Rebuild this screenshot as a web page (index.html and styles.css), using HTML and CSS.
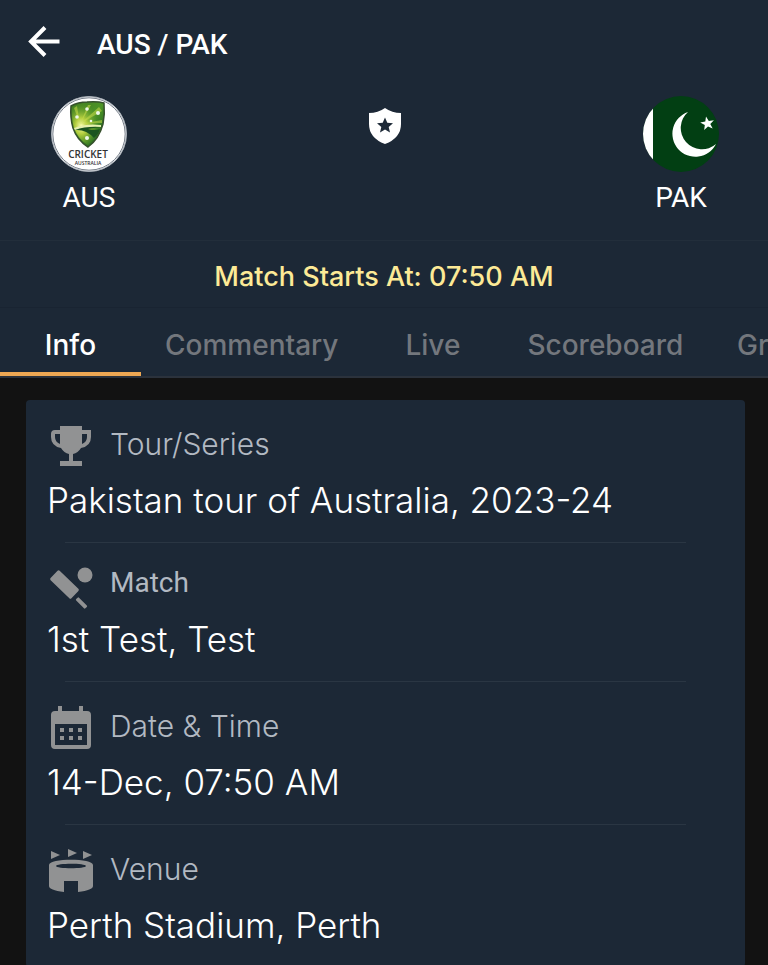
FILE: index.html
```
<!DOCTYPE html>
<html lang="en">
<head>
    <meta charset="UTF-8">
    <meta name="viewport" content="width=device-width, initial-scale=1.0">
    <title>AUS / PAK</title>
    <link rel="stylesheet" href="styles.css">
</head>
<body>
    <div class="app">
        <header class="top-bar">
            <button class="back" type="button" aria-label="Back">
                <svg width="32" height="32" viewBox="0 0 32 32" fill="none" stroke="#fff" stroke-width="4">
                    <path d="M31.500 15.500H3M17 1.500L3 15.500L17 29.500"/>
                </svg>
            </button>
            <h1>AUS / PAK</h1>
        </header>

        <section class="teams">
            <div class="team">
                <svg class="logo" viewBox="0 0 76 76">
                    <defs>
                        <linearGradient id="shield" x1="0" y1="0" x2="1" y2="1">
                            <stop offset="0" stop-color="#3f7a1f"/>
                            <stop offset="0.500" stop-color="#4d9426"/>
                            <stop offset="1" stop-color="#14551f"/>
                        </linearGradient>
                        <radialGradient id="sun" cx="0.300" cy="0.550" r="0.550">
                            <stop offset="0" stop-color="#fbffb0"/>
                            <stop offset="0.350" stop-color="#c5d943" stop-opacity="0.850"/>
                            <stop offset="1" stop-color="#5f9e2a" stop-opacity="0"/>
                        </radialGradient>
                    </defs>
                    <circle cx="38" cy="38" r="37.500" fill="#fff" stroke="#a9b0b8"/>
                    <circle cx="38" cy="38" r="36.200" fill="none" stroke="#3b4656" stroke-width="0.700"/>
                    <path d="M20 10Q27 6 36 6Q46 5 53 7Q54 18 52 28Q48 43 37 51Q26 44 22 32Q19 21 20 10Z" fill="url(#shield)" stroke="#36512c" stroke-width="1.500"/>
                    <path d="M21 11Q28 7 36 7Q46 6 52 8Q53 18 51 28Q47 42 37 49Q27 43 23 32Q20 21 21 11Z" fill="url(#sun)"/>
                    <path d="M29 28L37 9L40 9ZM29 28L48 11L51 15ZM29 28L23 12L26 10ZM29 28L51 24L51 27Z" fill="#c9dc4b" opacity="0.550"/>
                    <path d="M24 32Q36 28 50 31Q42 32 37 33Q44 35 49 33Q47 39 43 42Q35 33 24 34Z" fill="#1b5420"/>
                    <path d="M23 32Q35 27 50 29L50 31Q35 30 24 34Z" fill="#e6f0ae"/>
                    <g fill="#eef8e8">
                        <circle cx="36" cy="13" r="1.800"/>
                        <circle cx="47" cy="17" r="2"/>
                        <circle cx="26" cy="21" r="1.800"/>
                        <circle cx="40" cy="25" r="1.300"/>
                        <circle cx="36" cy="42" r="2"/>
                    </g>
                    <text class="logo-name" x="37" y="62" text-anchor="middle">CRICKET</text>
                    <text class="logo-country" x="37" y="69" text-anchor="middle">AUSTRALIA</text>
                </svg>
                <span>AUS</span>
            </div>
            <svg class="badge" width="34" height="36" viewBox="0 0 34 36">
                <path d="M17 0Q24 5 33 5V16Q33 30 17 36Q1 30 1 16V5Q10 5 17 0Z" fill="#fff"/>
                <path d="M17 9.500L19.300 14.800L25 15.300L20.700 19L22 24.600L17 21.600L12 24.600L13.300 19L9 15.300L14.700 14.800Z" fill="#1c2836"/>
            </svg>
            <div class="team">
                <svg class="logo" viewBox="0 0 76 76">
                    <defs>
                        <clipPath id="round"><circle cx="38" cy="38" r="38"/></clipPath>
                    </defs>
                    <g clip-path="url(#round)">
                        <rect width="76" height="76" fill="#023f13"/>
                        <rect width="10" height="76" fill="#fff"/>
                        <path d="M45 16A23 23 0 1 0 73 48A20.500 20.500 0 1 1 45 16Z" fill="#fff"/>
                        <path d="M63 20.500L65.800 25.100L70.900 24.200L67.300 28L69.700 32.600L65 30.500L61.200 34L61.800 28.900L57.200 26.400L62.300 25.500Z" fill="#fff"/>
                    </g>
                </svg>
                <span>PAK</span>
            </div>
        </section>

        <p class="status">Match Starts At: 07:50 AM</p>

        <nav class="tabs">
            <a class="active" href="#info">Info</a>
            <a href="#commentary">Commentary</a>
            <a href="#live">Live</a>
            <a href="#scoreboard">Scoreboard</a>
            <a href="#graph">Graph</a>
        </nav>

        <main class="content">
            <div class="card" id="info">
                <div class="item">
                    <div class="label">
                        <svg viewBox="0 0 44 44" fill="#919293">
                            <path d="M11 2H33V6H42V13Q42 22 32 24Q29 29 24 30V37H33V42H11V37H20V30Q15 29 12 24Q2 22 2 13V10Q2 6 6 6H11ZM11 10H6V13Q6 18 11 20ZM33 10V20Q38 18 38 13V10Z" fill-rule="evenodd"/>
                        </svg>
                        <h2>Tour/Series</h2>
                    </div>
                    <p>Pakistan tour of Australia, 2023-24</p>
                </div>
                <div class="item short">
                    <div class="label">
                        <svg viewBox="0 0 44 44" fill="#919293">
                            <circle cx="36" cy="8" r="7.500"/>
                            <rect x="1" y="11" width="29" height="13" rx="1.500" transform="rotate(44 15.500 17.500)"/>
                            <rect x="26" y="34" width="13" height="4" rx="1" transform="rotate(45 32.500 36)"/>
                        </svg>
                        <h2>Match</h2>
                    </div>
                    <p>1st Test, Test</p>
                </div>
                <div class="item">
                    <div class="label">
                        <svg viewBox="0 0 44 44" fill="#919293">
                            <path d="M9 0H13V5H30V0H34V5H38Q42 5 42 9V39Q42 43 38 43H6Q2 43 2 39V9Q2 5 6 5H9ZM6 18V39H38V18Z" fill-rule="evenodd"/>
                            <path d="M11 22h4v4h-4zM20 22h4v4h-4zM29 22h4v4h-4zM11 30h4v4h-4zM20 30h4v4h-4zM29 30h4v4h-4z"/>
                        </svg>
                        <h2>Date &amp; Time</h2>
                    </div>
                    <p>14-Dec, 07:50 AM</p>
                </div>
                <div class="item">
                    <div class="label">
                        <svg viewBox="0 0 44 44" fill="#919293">
                            <path d="M2 2L11 6L2 10ZM19 0L28 4L19 8ZM34 2L43 6L34 10Z"/>
                            <path d="M0 16C0 9 44 9 44 16V37Q44 41 29 43V32H15V43Q0 41 0 37ZM7 17C7 20 37 20 37 17C37 14 7 14 7 17Z" fill-rule="evenodd"/>
                        </svg>
                        <h2>Venue</h2>
                    </div>
                    <p>Perth Stadium, Perth</p>
                </div>
            </div>
        </main>
    </div>
</body>
</html>
```
FILE: styles.css
```
* {
    box-sizing: border-box;
}
body {
    margin: 0;
    font-family: Inter, sans-serif;
    background-color: #121212;
    color: #fff;
}
h1, h2, p {
    margin: 0;
}
.app {
    display: flex;
    flex-direction: column;
    height: 100vh;
    overflow: hidden;
}
.top-bar, .teams, .status, .tabs {
    flex-shrink: 0;
    background-color: #1c2836;
}
.top-bar {
    display: flex;
    align-items: center;
    gap: 37px;
    height: 88px;
    padding: 0 28px;
}
.back {
    display: flex;
    padding: 0 0 4px;
    border: none;
    background: none;
    cursor: pointer;
}
h1 {
    font-family: Roboto, sans-serif;
    font-size: 28px;
    font-weight: 500;
}
.teams {
    display: flex;
    justify-content: space-between;
    align-items: flex-start;
    padding: 8px 49px 24px 51px;
}
.team {
    display: flex;
    flex-direction: column;
    align-items: center;
    gap: 8px;
    font-family: Roboto, sans-serif;
    font-size: 28px;
    line-height: 36px;
}
.logo {
    width: 76px;
    height: 76px;
}
.logo-name {
    font-family: "Open Sans", sans-serif;
    font-size: 10px;
    font-weight: 600;
    fill: #333;
}
.logo-country {
    font-family: "Open Sans", sans-serif;
    font-size: 5px;
    font-weight: 600;
    fill: #333;
}
.badge {
    margin-top: 12px;
}
.status {
    padding: 20px 0 14px;
    border-top: 1px solid #222e3b;
    border-bottom: 1px solid #192432;
    font-size: 27px;
    font-weight: 500;
    line-height: 32px;
    text-align: center;
    color: #fdea96;
}
.tabs {
    display: flex;
    overflow: hidden;
    border-bottom: 2px solid #2b323c;
}
.tabs a {
    flex-shrink: 0;
    min-width: 141px;
    padding: 21px 24px 11px;
    border-bottom: 4px solid transparent;
    font-size: 28px;
    font-weight: 500;
    line-height: 32px;
    text-align: center;
    text-decoration: none;
    color: #73777d;
}
.tabs a.active {
    border-bottom-color: #eea853;
    color: #fff;
}
.content {
    flex: 1;
    overflow: auto;
    padding: 22px 23px 0 26px;
    scrollbar-width: none;
}
.card {
    padding: 0 59px 0 21px;
    border-radius: 4px;
    background-color: #1c2836;
}
.item {
    padding: 24px 0 20px;
}
.item + .item {
    background: linear-gradient(#2a3643, #2a3643) 18px 0 / 100% 1px no-repeat;
    padding-top: 25px;
}
.label {
    display: flex;
    align-items: flex-start;
    gap: 17px;
    height: 44px;
    margin: 0 0 10px 2px;
}
.label svg {
    width: 44px;
    height: 44px;
}
h2 {
    font-size: 30px;
    font-weight: 300;
    line-height: 40px;
    color: #b2b9c2;
}
.item p {
    font-size: 35px;
    font-weight: 300;
    line-height: 44px;
}
.short .label {
    height: 40px;
}
.short h2 {
    font-family: Roboto, sans-serif;
    font-size: 28px;
    font-weight: 400;
    line-height: 32px;
}
```
